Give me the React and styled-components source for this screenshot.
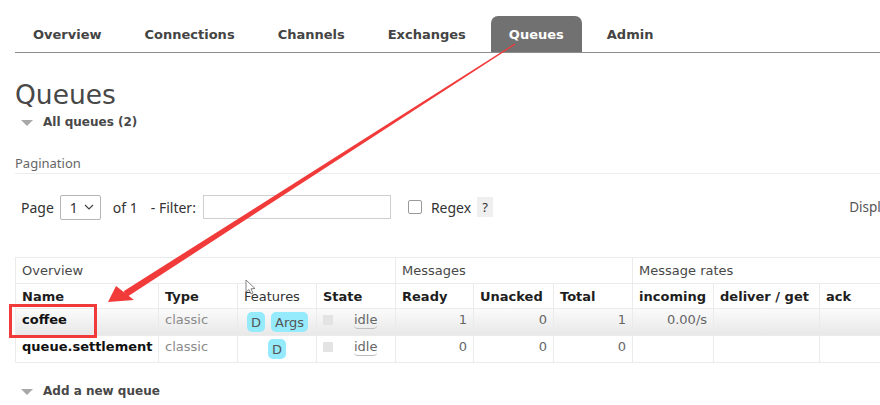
import React from "react";
import styled, { createGlobalStyle } from "styled-components";

const GlobalStyle = createGlobalStyle`
  html, body {
    margin: 0;
    padding: 0;
    background: #fff;
    overflow: hidden;
  }
  body {
    font-family: "DejaVu Sans", Verdana, sans-serif;
    color: #484848;
  }
`;

const tabs = ["Overview", "Connections", "Channels", "Exchanges", "Queues", "Admin"];

const columns = [
  { label: "Name", width: 143 },
  { label: "Type", width: 79 },
  { label: "Features", width: 79, light: true },
  { label: "State", width: 79 },
  { label: "Ready", width: 78 },
  { label: "Unacked", width: 80 },
  { label: "Total", width: 79 },
  { label: "incoming", width: 81 },
  { label: "deliver / get", width: 106 },
  { label: "ack", width: 90 },
];

const queues = [
  { name: "coffee", type: "classic", features: ["D", "Args"], ready: 1, unacked: 0, total: 1, incoming: "0.00/s", alt: true },
  { name: "queue.settlement", type: "classic", features: ["D"], ready: 0, unacked: 0, total: 0, incoming: "" },
];

export default function App() {
  return (
    <Page>
      <GlobalStyle />
      <Nav>
        {tabs.map((t) => (
          <Tab key={t} active={t === "Queues"}>{t}</Tab>
        ))}
      </Nav>

      <Title>Queues</Title>
      <Toggle>All queues (2)</Toggle>

      <SubHead>Pagination</SubHead>
      <Pager>
        <span>Page</span>
        <Select>
          1
          <svg width="10" height="6" viewBox="0 0 10 6">
            <path d="M1 1l4 4 4-4" fill="none" stroke="#444" strokeWidth="1.2" />
          </svg>
        </Select>
        <Gap w={12}>of 1</Gap>
        <Gap w={13}>- Filter:</Gap>
        <Filter />
        <Check />
        <Gap w={9}>Regex</Gap>
        <Help>?</Help>
        <Display>Displaying 2 items , page size up to:</Display>
      </Pager>

      <Table>
        <colgroup>
          {columns.map((c) => (
            <col key={c.label} style={{ width: c.width }} />
          ))}
        </colgroup>
        <thead>
          <tr>
            <GroupTh colSpan={4}>Overview</GroupTh>
            <GroupTh colSpan={3}>Messages</GroupTh>
            <GroupTh colSpan={3}>Message rates</GroupTh>
          </tr>
          <tr>
            {columns.map((c) => (
              <ColTh key={c.label} light={c.light}>{c.label}</ColTh>
            ))}
          </tr>
        </thead>
        <tbody>
          {queues.map((q) => (
            <Row key={q.name} alt={q.alt}>
              <NameCell>{q.name}</NameCell>
              <MutedCell>{q.type}</MutedCell>
              <FeatureCell>
                {q.features.map((f) => (
                  <Badge key={f}>{f}</Badge>
                ))}
              </FeatureCell>
              <Cell>
                <StateBox />
                <Idle>idle</Idle>
              </Cell>
              <NumCell>{q.ready}</NumCell>
              <NumCell>{q.unacked}</NumCell>
              <NumCell>{q.total}</NumCell>
              <NumCell>{q.incoming}</NumCell>
              <Cell />
              <Cell />
            </Row>
          ))}
        </tbody>
      </Table>

      <Toggle bottom>Add a new queue</Toggle>

      <Overlay width="880" height="405" viewBox="0 0 880 405">
        <polygon
          points="515.4,44.5 514.6,43.5 123.6,291.3 127.3,296.7"
          fill="#f13a3a"
        />
        <polygon points="108,302 116,286 134,300" fill="#f13a3a" />
        <rect x="10.5" y="305.5" width="85" height="31" fill="none" stroke="#f13a3a" strokeWidth="3" />
        <path
          d="M246 280 L246 292 L249 289.5 L251 294 L253 293 L251 288.8 L255 288.5 Z"
          fill="#fff"
          stroke="#666"
          strokeWidth="0.8"
        />
      </Overlay>
    </Page>
  );
}

const Page = styled.div`
  position: relative;
  width: 880px;
  height: 405px;
  padding-left: 15px;
  box-sizing: border-box;
  overflow: hidden;
`;

const Nav = styled.div`
  display: flex;
  margin-top: 16px;
  height: 36px;
  border-bottom: 1px solid #8c8c8c;
`;

const Tab = styled.div`
  display: flex;
  align-items: center;
  padding: 0 18px;
  margin-right: 7px;
  font-size: 13px;
  font-weight: bold;
  color: ${(p) => (p.active ? "#fff" : "#444")};
  background: ${(p) => (p.active ? "#717171" : "transparent")};
  border-radius: 7px 7px 0 0;
`;

const Title = styled.h1`
  margin: 26px 0 0;
  height: 31px;
  line-height: 31px;
  font-size: 26.5px;
  font-weight: normal;
  color: #484848;
`;

const Toggle = styled.div`
  position: relative;
  margin-top: ${(p) => (p.bottom ? "18px" : "2px")};
  height: 20px;
  line-height: 20px;
  padding-left: 28px;
  font-size: 12px;
  font-weight: bold;
  color: #484848;

  &::before {
    content: "";
    position: absolute;
    left: 6px;
    top: 8px;
    border-left: 6px solid transparent;
    border-right: 6px solid transparent;
    border-top: 6px solid #a8a8a8;
  }
`;

const SubHead = styled.div`
  margin-top: 21px;
  height: 20px;
  line-height: 20px;
  font-family: "Noto Sans", "Open Sans", sans-serif;
  font-size: 13px;
  color: #666;
  border-bottom: 1px solid #ececec;
`;

const Pager = styled.div`
  display: flex;
  align-items: center;
  margin-top: 20px;
  height: 26px;
  padding-left: 6px;
  font-family: "Noto Sans", "Open Sans", sans-serif;
  font-size: 14px;
  color: #333;
  white-space: nowrap;

  & > * {
    flex-shrink: 0;
  }
`;

const Select = styled.div`
  display: flex;
  align-items: center;
  justify-content: space-between;
  box-sizing: border-box;
  width: 41px;
  height: 25px;
  margin-left: 6px;
  padding: 0 6px 0 9px;
  border: 1px solid #b5b5b5;
  border-radius: 2px;
`;

const Gap = styled.span`
  margin-left: ${(p) => p.w}px;
`;

const Filter = styled.div`
  box-sizing: border-box;
  width: 188px;
  height: 24px;
  margin-left: 7px;
  border: 1px solid #cfcfcf;
`;

const Check = styled.div`
  box-sizing: border-box;
  width: 14px;
  height: 14px;
  margin-left: 17px;
  border: 1px solid #9a9a9a;
  border-radius: 2px;
`;

const Help = styled.div`
  width: 16px;
  height: 20px;
  margin-left: 6px;
  line-height: 20px;
  text-align: center;
  background: #efefef;
  font-size: 13px;
`;

const Display = styled.span`
  margin-left: 356px;
  color: #555;
  font-size: 13.5px;
`;

const Table = styled.table`
  margin-top: 37px;
  border-collapse: collapse;
  table-layout: fixed;
  width: 894px;
  font-size: 13px;

  td, th {
    border: 1px solid #ebebeb;
    padding: 0 6px;
    white-space: nowrap;
    overflow: hidden;
  }
`;

const GroupTh = styled.th`
  height: 25px;
  text-align: left;
  font-weight: normal;
  color: #484848;
`;

const ColTh = styled.th`
  height: 24px;
  text-align: left;
  font-weight: ${(p) => (p.light ? "normal" : "bold")};
  color: ${(p) => (p.light ? "#333" : "#1e1e1e")};
`;

const Row = styled.tr`
  height: 27px;
  background: ${(p) => (p.alt ? "linear-gradient(#fbfbfb, #e7e7e7)" : "#fff")};

  td {
    vertical-align: top;
    padding-top: 2px;
    line-height: 17px;
  }
`;

const Cell = styled.td`
  color: #555;
`;

const NameCell = styled.td`
  font-weight: bold;
  color: #111;
`;

const MutedCell = styled.td`
  color: #8a8a8a;
`;

const FeatureCell = styled.td`
  text-align: center;
`;

const NumCell = styled.td`
  text-align: right;
  color: #666;
`;

const Badge = styled.span`
  display: inline-block;
  height: 20px;
  line-height: 22px;
  padding: 0 4px;
  margin: 1px 3px 0;
  border-radius: 5px;
  background: #95eafb;
  color: #555;
  vertical-align: top;
`;

const StateBox = styled.span`
  display: inline-block;
  width: 10px;
  height: 10px;
  background: #e3e3e3;
  vertical-align: -1px;
`;

const Idle = styled.span`
  margin-left: 21px;
  color: #666;
  padding-bottom: 1px;
  border-bottom: 1px solid #bdbdbd;
  border-radius: 0 0 4px 4px;
`;

const Overlay = styled.svg`
  position: absolute;
  left: 0;
  top: 0;
  pointer-events: none;
`;
